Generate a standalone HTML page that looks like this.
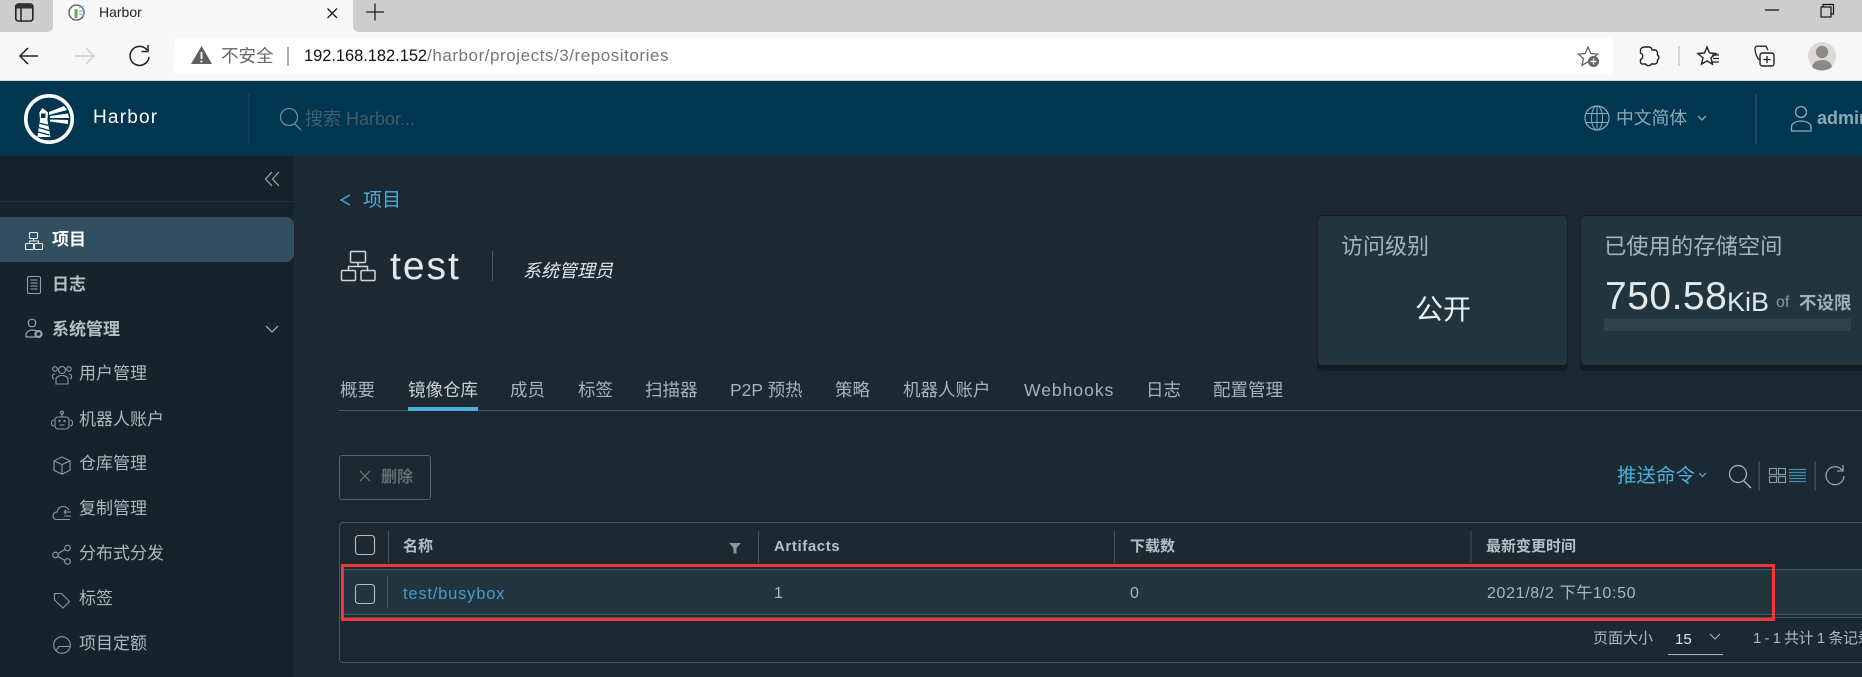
<!DOCTYPE html>
<html lang="zh"><head><meta charset="utf-8"><title>Harbor</title>
<style>
html,body{margin:0;padding:0;width:1862px;height:677px;overflow:hidden;background:#1c2933}
body{position:relative;font-family:"Liberation Sans","Noto Sans CJK SC",sans-serif}
.b{position:absolute}
.t{position:absolute;white-space:nowrap;line-height:24px;height:24px}
svg{position:absolute;left:0;top:0}
.side{color:#a9b8c1;font-size:17px}
.sb{color:#b4c1c9;font-size:17px;font-weight:700}
.tab{color:#a2b4bf;font-size:17.5px}
.th{color:#b3c0c8;font-size:15px;font-weight:700}
</style></head><body>
<div class="b" style="left:0;top:0;width:1862px;height:80px;background:#f7f7f7"></div>
<div class="b" style="left:0;top:0;width:53px;height:32px;background:#cdcdcd;border-radius:0 0 6px 0"></div>
<div class="b" style="left:353px;top:0;width:1509px;height:32px;background:#cdcdcd;border-radius:0 0 0 6px"></div>
<div class="b" style="left:0;top:80px;width:1862px;height:1px;background:#d8d8d8"></div>
<div class="b" style="left:174px;top:37px;width:1439px;height:38px;background:#fff;border-radius:6px"></div>
<div class="b" style="left:0;top:81px;width:1862px;height:75px;background:#00364f"></div>
<div class="b" style="left:0;top:156px;width:294px;height:521px;background:#17232c"></div>
<div class="b" style="left:0;top:201px;width:294px;height:1px;background:#22303a"></div>
<div class="b" style="left:0;top:217px;width:294px;height:45px;background:#324f61;border-radius:0 8px 8px 0"></div>
<div class="b" style="left:1318px;top:216px;width:249px;height:154px;background:#22343e;box-shadow:inset 0 -5px 0 #121c23,0 0 0 1px #141f27;border-radius:4px"></div>
<div class="b" style="left:1581px;top:216px;width:300px;height:154px;background:#22343e;box-shadow:inset 0 -5px 0 #121c23,0 0 0 1px #141f27;border-radius:4px"></div>
<div class="b" style="left:1604px;top:319px;width:247px;height:12px;background:#30414c"></div>
<div class="b" style="left:339px;top:410px;width:1523px;height:1px;background:#4a5b66"></div>
<div class="b" style="left:408px;top:407px;width:70px;height:4px;background:#49afd9"></div>
<div class="b" style="left:339px;top:455px;width:90px;height:43px;border:1px solid #56656f;border-radius:3px"></div>
<div class="b" style="left:339px;top:522px;width:1560px;height:139px;border:1px solid #45545f;border-radius:4px"></div>
<div class="b" style="left:340px;top:569px;width:1522px;height:46px;background:#22343e;border-top:1px solid #45545f;box-sizing:border-box"></div>
<div class="b" style="left:340px;top:614px;width:1522px;height:1px;background:#45545f"></div>
<div class="b" style="left:340px;top:617px;width:1522px;height:1px;background:#45545f"></div>
<div class="b" style="left:341px;top:564px;width:1434px;height:57px;border:3px solid #f1353a;box-sizing:border-box;z-index:3"></div>

<svg width="1862" height="677" viewBox="0 0 1862 677" fill="none">
<!-- browser chrome -->
<rect x="15.800" y="4" width="17" height="17" rx="2.500" stroke="#222" stroke-width="1.600"/><rect x="16" y="4" width="16.500" height="4.500" fill="#333"/><path d="M21 8.500V21" stroke="#222" stroke-width="1.500"/>
<rect x="68" y="3" width="19" height="19" fill="#fff"/><circle cx="76.500" cy="12.500" r="7.500" stroke="#5c6b62" stroke-width="1.500"/><rect x="74.500" y="9" width="3" height="9" fill="#6aa84f"/><path d="M79 8l5-2M79 11l6 0M79 14l5 1" stroke="#7cb0e0" stroke-width="1.200"/>
<path d="M327.500 8.500l9.500 9.500M337 8.500l-9.500 9.500" stroke="#222" stroke-width="1.400"/>
<path d="M366 12h18M375 3.500v17" stroke="#222" stroke-width="1.300"/>
<path d="M1765 10h14" stroke="#111" stroke-width="1.300"/><rect x="1821" y="7" width="10" height="10" stroke="#111" stroke-width="1.200"/><path d="M1823 7V4.500h10.500V14H1831" stroke="#111" stroke-width="1.200"/>
<path d="M38 56H20M28 48l-8 8 8 8" stroke="#222" stroke-width="1.500"/>
<path d="M94 56H75M86 48l8 8-8 8" stroke="#cfcfcf" stroke-width="1.500"/>
<path d="M147 50a9.500 9.500 0 1 0 2 7M148 45v6.500h-6.500" stroke="#222" stroke-width="1.500"/>
<path d="M201.500 46l10.500 18h-21z" fill="#5f5f5f"/><path d="M201.500 52v7M201.500 60.500v2" stroke="#fff" stroke-width="1.800"/>
<path d="M288 47v19" stroke="#777" stroke-width="1.200"/>
<path d="M1588 47l2.800 6.500 6.700.6-5 4.500 1.500 6.700-6-3.500-6 3.500 1.500-6.700-5-4.500 6.700-.6z" stroke="#666" stroke-width="1.300"/><circle cx="1593.500" cy="61.500" r="5.500" fill="#666"/><path d="M1590.500 61.500h6M1593.500 58.500v6" stroke="#fff" stroke-width="1.300"/>
<path d="M1644 47h5a3 3 0 0 1 3 3l3 0a3 3 0 0 1 2.500 3v2a3 3 0 0 1 0 5v1a3 3 0 0 1-3 3h-3a3.500 3.500 0 0 1-6 0h-3a2 2 0 0 1-2-2.500v-2a3.500 3.500 0 0 0 0-6.500v-3a2.500 2.500 0 0 1 2.500-2.500z" stroke="#222" stroke-width="1.400"/>
<path d="M1679 46v20" stroke="#ccc" stroke-width="1.500"/>
<path d="M1707 47l2.500 6 6.500.6-5 4.300 1.500 6.300-5.500-3.300-5.500 3.300 1.500-6.300-5-4.300 6.500-.6z" stroke="#222" stroke-width="1.400"/><path d="M1712 55h7M1713 58.500h6M1712 62h7" stroke="#222" stroke-width="1.200"/>
<rect x="1760" y="53" width="14" height="13" rx="2.500" stroke="#222" stroke-width="1.400"/><path d="M1767 56v7M1763.500 59.500h7M1760 60c-3-1-5-8-5-11 0-2 1-3 3-2.800l8 0 2 4" stroke="#222" stroke-width="1.300"/>
<circle cx="1822" cy="56" r="14" fill="#dcdad6"/><circle cx="1822" cy="52" r="6.200" fill="#8d8a86"/><path d="M1812 67c1-5 5-7 10-7s9 2 10 7c-3 2.500-7 3.500-10 3.500s-7-1-10-3.500z" fill="#8d8a86"/>
<!-- logo -->
<circle cx="49" cy="119" r="23.200" stroke="#fff" stroke-width="3.600"/>
<path d="M42.500 108l5.500 4.500v1l-.6 6 3 17.500h-13l2.600-17.500-.6-6v-1z" fill="#fff"/>
<rect x="41" y="113.500" width="4.500" height="4.500" fill="#00364f"/>
<path d="M39 123l9.500 2.500M38.500 127.500l10.500 3M38 132l11.500 3" stroke="#00364f" stroke-width="1.300"/>
<path d="M49 112l15-6 3 4-18 5zM50 116l18-2.500 1 4.500-19 0zM50 119.500l18 .5v4l-18-2.500z" fill="#fff"/>
<path d="M249 94v50" stroke="#1c4a60"/>
<circle cx="289" cy="117" r="8.500" stroke="#6f8a98" stroke-width="1.300"/><path d="M295 124l6 6" stroke="#6f8a98" stroke-width="1.400"/>
<circle cx="1597" cy="118" r="12" stroke="#8ea9b6" stroke-width="1.200"/><ellipse cx="1597" cy="118" rx="5.500" ry="12" stroke="#8ea9b6" stroke-width="1"/><path d="M1597 106v24M1586 113.500h22M1586 122.500h22" stroke="#8ea9b6" stroke-width="1"/>
<path d="M1698 116l4 4 4-4" stroke="#8ea9b6" stroke-width="1.300"/>
<path d="M1756 94v50" stroke="#2c5a70"/>
<circle cx="1801" cy="112" r="5.500" stroke="#8ea9b6" stroke-width="1.300"/><path d="M1791.500 131v-4c0-3.500 4-6 9.500-6s10 2.500 10 6v4z" stroke="#8ea9b6" stroke-width="1.300"/>
<!-- sidebar icons -->
<path d="M272 172l-6.500 7 6.500 7M279 172l-6.500 7 6.500 7" stroke="#a9b8c1" stroke-width="1"/>
<g stroke="#e8edf0" stroke-width="1.100"><rect x="29.500" y="232.500" width="8" height="6" rx="1"/><rect x="25.500" y="243.500" width="8" height="6" rx="1"/><rect x="34.500" y="243.500" width="8" height="6" rx="1"/><path d="M33.500 238.500v2.500M29.500 243.500v-2.500h9v2.500"/></g>
<g stroke="#8fa0ab" stroke-width="1.100"><rect x="27.500" y="276.500" width="13" height="17" rx="1.500"/><path d="M30.500 280h7M30.500 283h7M30.500 286h7M30.500 289h7"/></g>
<g stroke="#97a6b0" stroke-width="1.200"><circle cx="32" cy="323" r="3.800"/><path d="M26 337v-2c0-3 3-5 6-5s4 .5 5 1M26 337h10"/></g><circle cx="38.500" cy="334" r="3" stroke="#97a6b0" stroke-width="2.200"/>
<path d="M266 326l6 6 6-6" stroke="#a9b8c1" stroke-width="1.200"/>
<g stroke="#8b9aa4" stroke-width="1.100">
<circle cx="62" cy="370" r="3.500"/><path d="M56 384v-5c0-2 3-3.500 6-3.500s6 1.500 6 3.500v5z"/><circle cx="55" cy="369" r="2.300"/><circle cx="69" cy="369" r="2.300"/><path d="M54 379c-1.500-.5-1.500-1-1.500-3 0-1 1-2 2.500-2M70 379c1.500-.5 1.500-1 1.500-3 0-1-1-2-2.500-2"/>
<rect x="55" y="417" width="14" height="12" rx="3"/><path d="M62 417v-3M59.500 425h5"/><circle cx="62" cy="412.500" r="1.400"/><path d="M54 420c-2 0-2.500 1-2.500 3s.5 3 2.500 3M70 420c2 0 2.500 1 2.500 3s-.5 3-2.500 3"/><circle cx="59.500" cy="421" r=".6"/><circle cx="64.500" cy="421" r=".6"/>
<path d="M62 457l8 3.800v9.500l-8 4-8-4v-9.500zM54 460.800l8 3.800 8-3.800M62 464.600v9.700"/>
<path d="M53 516c0-2.500 2-4 4-4 .5-3.500 3-5.500 6-5.500s5 1.500 6 3.500M53 516c0 2 1.500 3.500 3.500 3.500H70M64 512h7M64 512l2-2M64 512l2 2M71 516h-7"/>
<circle cx="55.500" cy="555" r="2.800"/><circle cx="67.500" cy="548" r="2.800"/><circle cx="67.500" cy="561.500" r="2.800"/><path d="M58 553.500l7-4M58 556.500l7 4"/>
<path d="M54.500 593.500h7l8 8-6.500 6.500-8.500-8zM58 597h.5"/>
<circle cx="62" cy="645" r="8.300"/><path d="M56 651l3-4.500h11"/>
</g>
<!-- title icon -->
<g stroke="#cfd6db" stroke-width="1.500"><rect x="350.500" y="251.500" width="15" height="11" rx="1.200"/><rect x="341.500" y="270.500" width="14" height="10" rx="1.200"/><rect x="361" y="270.500" width="14" height="10" rx="1.200"/><path d="M358 262.500v4M348.500 270.500v-4h19v4"/></g>
<path d="M492.500 251v30" stroke="#4a5b66"/>
<path d="M350 195l-9 5 9 5" stroke="#49afd9" stroke-width="1.300"/>
<!-- delete x -->
<path d="M360 471l10 10M370 471l-10 10" stroke="#5f6d75" stroke-width="1.300"/>
<!-- toolbar -->
<path d="M1699 473l3.500 3.500 3.500-3.500" stroke="#49afd9" stroke-width="1.200"/>
<circle cx="1738" cy="474" r="8.500" stroke="#a9b8c1" stroke-width="1.200"/><path d="M1744 481l7 7" stroke="#a9b8c1" stroke-width="1.300"/>
<path d="M1759 461v30M1815 461v30" stroke="#4a5b66" stroke-width="1.200"/>
<g stroke="#8b9aa4" stroke-width="1.100"><rect x="1769.500" y="468.500" width="7" height="6"/><rect x="1778.500" y="468.500" width="7" height="6"/><rect x="1769.500" y="476.500" width="7" height="6"/><rect x="1778.500" y="476.500" width="7" height="6"/></g>
<path d="M1789 469.500h17M1789 472.500h17M1789 475.500h17M1789 478.500h17M1789 481.500h17" stroke="#3d8eb0" stroke-width="1.200"/>
<path d="M1842 470a9 9 0 1 0 2 6M1843 465v6h-6" stroke="#a9b8c1" stroke-width="1.100"/>
<!-- table -->
<rect x="355.500" y="535.500" width="19" height="19" rx="3" stroke="#b5bfc5" stroke-width="1.100"/>
<rect x="355.500" y="584.500" width="19" height="19" rx="3" stroke="#b5bfc5" stroke-width="1.100"/>
<path d="M388.500 531v32M758.500 531v32M1114.500 531v32M1471 531v32" stroke="#45545f"/>
<path d="M387.500 576v32" stroke="#45545f"/>
<path d="M729 543h12l-4.500 5v5.500h-3V548z" fill="#8c989f"/>
<path d="M1710 634l5 5 5-5" stroke="#a9b8c1" stroke-width="1.100"/>
<path d="M1668 654.500h55" stroke="#a9b8c1"/>
</svg>

<div class="t" style="left:99px;top:0;font-size:14px;color:#222">Harbor</div>
<div class="t" style="left:221px;top:44px;font-size:17.500px;color:#666">不安全</div>
<div class="t" style="left:304px;top:44px;font-size:16.400px;color:#767676"><span style="color:#111">192.168.182.152</span><span style="letter-spacing:.55px;font-size:17px">/harbor/projects/3/repositories</span></div>

<div class="t" style="left:93px;top:106px;font-size:19px;letter-spacing:1.200px;color:#fff">Harbor</div>
<div class="t" style="left:305px;top:107px;font-size:18px;color:#3f5e6f">搜索 Harbor...</div>
<div class="t" style="left:1616px;top:106px;font-size:17.800px;color:#8ea9b6">中文简体</div>
<div class="t" style="left:1817px;top:106px;font-size:18px;font-weight:700;color:#8ea9b6">admin</div>

<div class="t sb" style="left:52px;top:228px;color:#fff">项目</div>
<div class="t sb" style="left:52px;top:273px">日志</div>
<div class="t sb" style="left:52px;top:318px">系统管理</div>
<div class="t side" style="left:79px;top:362px">用户管理</div>
<div class="t side" style="left:79px;top:408px">机器人账户</div>
<div class="t side" style="left:79px;top:452px">仓库管理</div>
<div class="t side" style="left:79px;top:497px">复制管理</div>
<div class="t side" style="left:79px;top:542px">分布式分发</div>
<div class="t side" style="left:79px;top:587px">标签</div>
<div class="t side" style="left:79px;top:632px">项目定额</div>

<div class="t" style="left:363px;top:189px;font-size:19px;color:#49afd9">项目</div>
<div class="t" style="left:390px;top:255px;font-size:39px;letter-spacing:2px;color:#e2e7ea">test</div>
<div class="t" style="left:523px;top:259px;font-size:18px;font-style:italic;color:#dfe5e9">系统管理员</div>

<div class="t tab" style="left:340px;top:378px">概要</div>
<div class="t tab" style="left:408px;top:378px;color:#c6d2d9">镜像仓库</div>
<div class="t tab" style="left:510px;top:378px">成员</div>
<div class="t tab" style="left:578px;top:378px">标签</div>
<div class="t tab" style="left:645px;top:378px">扫描器</div>
<div class="t tab" style="left:730px;top:378px">P2P 预热</div>
<div class="t tab" style="left:835px;top:378px">策略</div>
<div class="t tab" style="left:903px;top:378px">机器人账户</div>
<div class="t tab" style="left:1024px;top:378px;letter-spacing:1px">Webhooks</div>
<div class="t tab" style="left:1146px;top:378px">日志</div>
<div class="t tab" style="left:1213px;top:378px">配置管理</div>

<div class="t" style="left:1341px;top:235px;font-size:22px;color:#a2b4bf">访问级别</div>
<div class="t" style="left:1415px;top:298px;font-size:28px;color:#eef1f3">公开</div>
<div class="t" style="left:1604px;top:235px;font-size:22.300px;color:#a2b4bf">已使用的存储空间</div>
<div class="t" style="left:1605px;top:285px;font-size:39px;letter-spacing:.5px;color:#e6eaed">750.58</div>
<div class="t" style="left:1727px;top:290px;font-size:27px;color:#dfe5e9">KiB</div>
<div class="t" style="left:1776px;top:291px;font-size:16px;color:#8b9aa4">of</div>
<div class="t" style="left:1799px;top:291px;font-size:17.500px;font-weight:700;color:#a2b0b9">不设限</div>

<div class="t" style="left:381px;top:466px;font-size:16px;font-weight:700;color:#5f6d75">删除</div>
<div class="t" style="left:1617px;top:464px;font-size:19.500px;color:#49afd9">推送命令</div>

<div class="t th" style="left:403px;top:535px">名称</div>
<div class="t th" style="left:774px;top:535px;letter-spacing:.6px">Artifacts</div>
<div class="t th" style="left:1130px;top:535px">下载数</div>
<div class="t th" style="left:1486px;top:535px">最新变更时间</div>
<div class="t" style="left:403px;top:582px;font-size:16.500px;letter-spacing:.8px;color:#3f9ed0">test/busybox</div>
<div class="t" style="left:774px;top:582px;font-size:16px;color:#a9b8c1">1</div>
<div class="t" style="left:1130px;top:582px;font-size:16px;color:#a9b8c1">0</div>
<div class="t" style="left:1487px;top:582px;font-size:16px;letter-spacing:.65px;color:#a9b8c1">2021/8/2 下午10:50</div>
<div class="t" style="left:1593px;top:627px;font-size:15px;color:#a9b8c1">页面大小</div>
<div class="t" style="left:1675px;top:628px;font-size:15px;color:#dfe5e9">15</div>
<div class="t" style="left:1753px;top:627px;font-size:15px;letter-spacing:-.5px;color:#a9b8c1">1 - 1 共计 1 条记录</div>
</body></html>
